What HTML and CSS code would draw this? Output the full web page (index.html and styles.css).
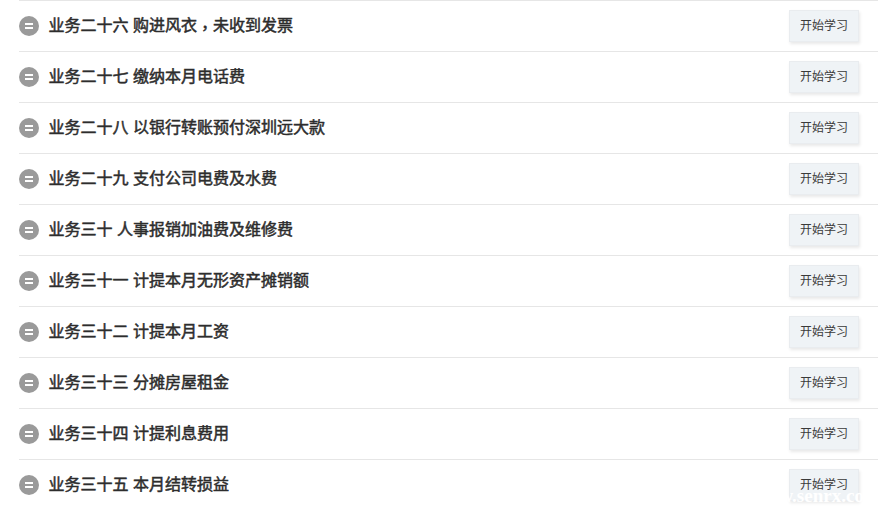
FILE: index.html
```html
<!DOCTYPE html>
<html lang="zh-CN">
<head>
  <meta charset="UTF-8" />
  <title>业务列表</title>
  <link rel="stylesheet" href="styles.css">
</head>
<body>
  <ul class="lesson-list">
    <li class="lesson"><span class="status"><i></i></span><span class="title">业务二十六 购进风衣<span class="comma" lang="zh-TW">，</span>未收到发票</span><a class="start-btn">开始学习</a></li>
    <li class="lesson"><span class="status"><i></i></span><span class="title">业务二十七 缴纳本月电话费</span><a class="start-btn">开始学习</a></li>
    <li class="lesson"><span class="status"><i></i></span><span class="title">业务二十八 以银行转账预付深圳远大款</span><a class="start-btn">开始学习</a></li>
    <li class="lesson"><span class="status"><i></i></span><span class="title">业务二十九 支付公司电费及水费</span><a class="start-btn">开始学习</a></li>
    <li class="lesson"><span class="status"><i></i></span><span class="title">业务三十 人事报销加油费及维修费</span><a class="start-btn">开始学习</a></li>
    <li class="lesson"><span class="status"><i></i></span><span class="title">业务三十一 计提本月无形资产摊销额</span><a class="start-btn">开始学习</a></li>
    <li class="lesson"><span class="status"><i></i></span><span class="title">业务三十二 计提本月工资</span><a class="start-btn">开始学习</a></li>
    <li class="lesson"><span class="status"><i></i></span><span class="title">业务三十三 分摊房屋租金</span><a class="start-btn">开始学习</a></li>
    <li class="lesson"><span class="status"><i></i></span><span class="title">业务三十四 计提利息费用</span><a class="start-btn">开始学习</a></li>
    <li class="lesson"><span class="status"><i></i></span><span class="title">业务三十五 本月结转损益</span><a class="start-btn">开始学习</a></li>
  </ul>
  <div class="watermark">www.senrx.com</div>
</body>
</html>
```

FILE: styles.css
```css
body {
  margin: 0;
  height: 515px;
  overflow: hidden;
  position: relative;
  background: #fff;
  font-family: "Liberation Sans", "Noto Sans CJK SC", sans-serif;
  color: #333;
}

.lesson-list {
  list-style: none;
  margin: 0 15px 0 19px;
  padding: 0;
}
.lesson {
  display: flex;
  align-items: center;
  height: 50px;
  border-top: 1px solid #e6e6e6;
  padding-right: 19px;
}

/* 灰色圆形图标 */
.status {
  flex: none;
  display: flex;
  align-items: center;
  justify-content: center;
  width: 20px;
  height: 20px;
  border-radius: 50%;
  background: #9a9a9a;
  margin-right: 9.5px;
}
.status i {
  display: block;
  width: 8px;
  height: 6px;
  border-top: 2px solid #fff;
  border-bottom: 2px solid #fff;
  box-sizing: border-box;
}

.title {
  flex: 1;
  font-size: 16px;
  font-weight: 400;
  -webkit-text-stroke: 0.5px #2d2d2d;
  color: #2d2d2d;
  padding-bottom: 4px;
}
/* 居中的逗号 */
.comma {
  font-family: "Noto Sans CJK TC", sans-serif;
  line-height: 0;
  vertical-align: -3px;
}

.start-btn {
  flex: none;
  width: 70px;
  height: 32px;
  line-height: 30px;
  text-align: center;
  font-size: 12px;
  color: #3a3a3a;
  background: #eff3f6;
  border: 1px solid #e9ecef;
  box-sizing: border-box;
  box-shadow: 1px 2px 3px rgba(0,0,0,0.09);
}

/* 水印 */
.watermark {
  position: absolute;
  left: 752px;
  top: 485px;
  font-family: "Liberation Serif", serif;
  font-weight: 700;
  font-size: 19px;
  color: #fff;
}
```
